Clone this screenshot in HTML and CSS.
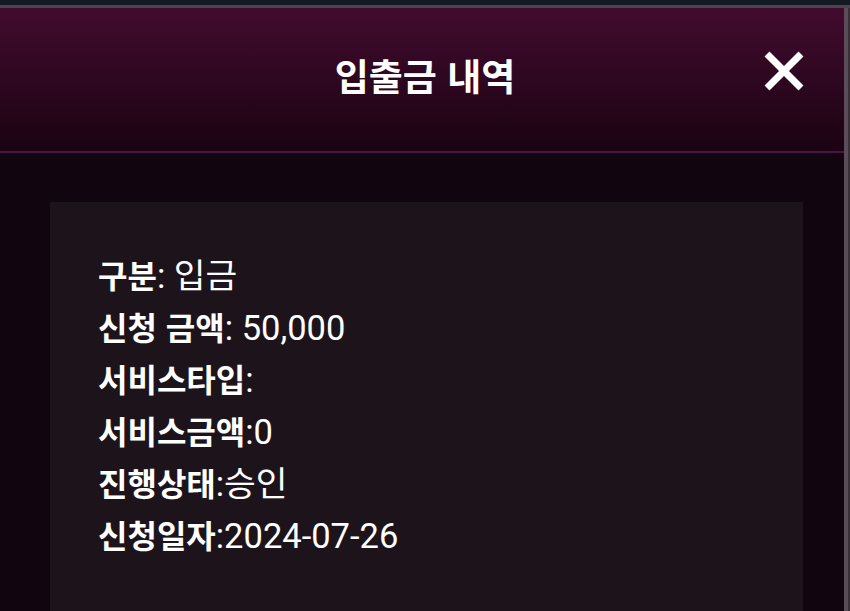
FILE: index.html
```html
<!DOCTYPE html>
<html lang="ko">
<head>
  <meta charset="UTF-8" />
  <meta name="viewport" content="width=device-width, initial-scale=1.0"/>
  <title>입출금 내역</title>
  <link rel="stylesheet" href="styles.css">
</head>
<body>
  <div class="topbar"></div>
  <div class="modal">
    <div class="modal-header">
      <h1>입출금 내역</h1>
      <button class="close" aria-label="닫기">
        <svg width="44" height="44" viewBox="0 0 44 44">
          <path d="M5 5 L39 39 M39 5 L5 39" stroke="#fff" stroke-width="7" stroke-linecap="butt"/>
        </svg>
      </button>
    </div>
    <div class="modal-body">
      <div class="detail">
        <p><b>구분</b>: 입금</p>
        <p><b>신청 금액</b>: 50,000</p>
        <p><b>서비스타입</b>:</p>
        <p><b>서비스금액</b>:0</p>
        <p><b>진행상태</b>:승인</p>
        <p><b>신청일자</b>:2024-07-26</p>
      </div>
    </div>
  </div>
</body>
</html>
```

FILE: styles.css
```css
html, body {
  margin: 0;
  height: 100%;
  overflow: hidden;
}
body {
  font-family: Roboto, "Noto Sans CJK KR", sans-serif;
  background: #3a3038;
  color: #fff;
}
.topbar {
  height: 5px;
  background: #141a24;
  border-bottom: 3px solid #4a4452;
}
.modal {
  width: 844px;
  height: calc(100% - 8px);
  overflow: hidden;
  background: #110610;
  border-right: 4px solid #5a4c58;
}
.modal-header {
  height: 143px;
  display: flex;
  align-items: center;
  justify-content: center;
  position: relative;
  background: linear-gradient(to bottom, #420b2e, #1a0312);
  border-bottom: 2px solid #4c1346;
}
.modal-header h1 {
  margin: -10px 0 0 6px;
  font-family: "Noto Sans CJK KR", sans-serif;
  font-size: 37px;
  font-weight: bold;
}
.close {
  position: absolute;
  right: 38px;
  top: 41px;
  background: none;
  border: 0;
  padding: 0;
  cursor: pointer;
}
.close svg {
  display: block;
}
.modal-body {
  padding: 49px 41px 0 50px;
}
.detail {
  background: #1d141b;
  padding: 46px 48px 0;
  height: 420px;
}
.detail p {
  margin: 0;
  height: 52px;
  font-size: 34.5px;
  line-height: 52px;
  white-space: nowrap;
}
.detail b {
  font-family: "Noto Sans CJK KR", sans-serif;
  font-size: 32px;
}
```
